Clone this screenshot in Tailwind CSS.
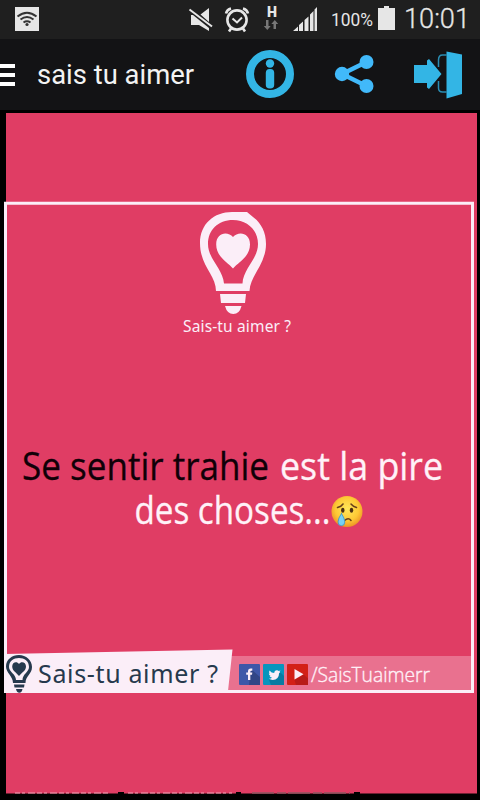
<!DOCTYPE html>
<html lang="fr">
<head>
  <meta charset="UTF-8">
  <meta name="viewport" content="width=device-width, initial-scale=1.0">
  <title>sais tu aimer</title>
  <script src="https://cdn.jsdelivr.net/npm/@tailwindcss/browser@4"></script>
</head>
<body class="bg-black w-[480px] h-[800px] overflow-hidden font-['Roboto',sans-serif]">

  <!-- Status bar -->
  <div class="flex h-[39px] bg-[#1f1f1f]">
    <svg class="w-[480px] h-[39px]" viewBox="0 0 480 39" fill="#e6e6e6">
      <rect x="15" y="7" width="24" height="24" />
      <g fill="none" stroke="#333" stroke-width="2">
        <path d="M17.500 16.500Q27 9 36.500 16.500" />
        <path d="M20.500 19.500Q27 14.500 33.500 19.500" />
        <path d="M23.500 22.500Q27 20 30.500 22.500" />
      </g>
      <circle cx="27" cy="24.500" r="1.600" fill="#333" />
      <!-- muted speaker -->
      <path d="M191 15v10h8l10 6V28L193 15zM200.500 14.500L209 8v14z" />
      <path d="M189.500 9.500L212 26.500" stroke="#e6e6e6" stroke-width="2" />
      <!-- alarm -->
      <g fill="none" stroke="#e6e6e6" stroke-width="2.600">
        <circle cx="237" cy="20" r="9.600" />
        <path d="M232.500 18.500l4.500 4 5-5" stroke-width="2" />
        <path d="M226 13.500q1-4 5-5M243 8.500q4 1 5 5" />
        <path d="M231 28.500l-2 3M243 28.500l2 3" />
      </g>
      <text x="267" y="17" font-family="Roboto" font-weight="900" font-size="14" textLength="10" lengthAdjust="spacingAndGlyphs">H</text>
      <path d="M266 20h2.500v6h2.200l-3.400 4-3.500-4h2.200zM273.500 29h2.500v-5h2.200l-3.400-4-3.500 4h2.200z" fill="#777" />
      <!-- signal -->
      <path d="M293 31l5-4.500V31zM299 31v-6l4-3.500V31zM304.500 31V20l4-3.500V31zM310 31V14.500l3.500-3.500V31zM314.500 31V9.500L317 7v24z" />
      <text x="331" y="26" font-family="Roboto" font-size="18.500" textLength="42" lengthAdjust="spacingAndGlyphs">100%</text>
      <path d="M378 8h6V6h5v2h6v22h-17z" />
      <text x="404" y="27.700" font-family="Roboto" font-weight="300" font-size="28" stroke="#e6e6e6" stroke-width="0.300" textLength="66" lengthAdjust="spacingAndGlyphs">10:01</text>
    </svg>
  </div>

  <!-- Action bar -->
  <header class="flex items-center h-[71px] bg-[#131315]">
    <div class="flex flex-col gap-[5px] w-[15px] mt-px">
      <span class="h-1 bg-white"></span>
      <span class="h-1 bg-white"></span>
      <span class="h-1 bg-white"></span>
    </div>
    <svg class="ml-[22px] w-[209px] h-[71px]" viewBox="37 39 209 71" fill="#f3f3f3">
      <text x="37" y="84" font-family="Roboto" font-size="27.500" textLength="157" lengthAdjust="spacingAndGlyphs">sais tu aimer</text>
    </svg>
    <svg class="w-12 h-12 mt-[-1px]" viewBox="0 0 48 48">
      <circle cx="24" cy="24" r="20" fill="none" stroke="#33b5e5" stroke-width="8" />
      <circle cx="24" cy="13.500" r="4.200" fill="#33b5e5" />
      <rect x="19.800" y="19" width="8.400" height="19.500" rx="3.800" fill="#33b5e5" />
    </svg>
    <svg class="ml-10 w-10 h-10 mt-[-1px]" viewBox="334 54 40 40" fill="#41b9fa">
      <path d="M366.500 62L342 74l24.500 12" fill="none" stroke="#41b9fa" stroke-width="4.500" />
      <circle cx="342" cy="74" r="7.200" />
      <circle cx="366.500" cy="62" r="7" />
      <circle cx="366.500" cy="86" r="7" />
    </svg>
    <svg class="ml-10 w-[50px] h-[50px]" viewBox="414 49 50 50" fill="#33b5e5">
      <path d="M414 64h13v-4.500l2-1.500L441.500 73 429 88l-2-1.500V82H414z" />
      <path d="M438.500 66v-7q0-5 4-5h4M438.500 80v7q0 4 4 4h4" fill="none" stroke="#2a8db3" stroke-width="1.500" />
      <path d="M446.500 50.500l15.500 3V93l-15.500 4.500z" />
    </svg>
  </header>

  <!-- Quote card -->
  <main class="mt-[3px] flex flex-col w-[480px] h-[682px]">
    <svg class="w-[480px] h-[682px]" viewBox="0 113 480 682">
      <defs>
        <radialGradient id="face" cx="50%" cy="42%" r="58%">
          <stop offset="0" stop-color="#ffe75a" />
          <stop offset="0.650" stop-color="#fdc935" />
          <stop offset="1" stop-color="#ed9425" />
        </radialGradient>
      </defs>
      <rect x="6" y="113" width="471" height="680.500" fill="#e03d64" />
      <!-- tops of the thumbnails below -->
      <path d="M15 793h94M128 793h104" stroke="#f0a5b8" stroke-width="1" stroke-dasharray="5 2 3 3 7 2" />
      <path d="M252 793h98" stroke="#8d5560" stroke-width="1.500" stroke-dasharray="22 3 9 2" />
      <path d="M118 792h6v3h-6zM236 792h5v3h-5zM354 792h6v3h-6z" fill="#000" />

      <!-- bottom band and frame -->
      <rect x="228" y="656" width="244" height="35" fill="#e9718f" />
      <path d="M5.500 203.300H472.500V691.500H5.500z" fill="none" stroke="#fbeef8" stroke-width="3" />
      <path d="M4 654L232.500 649.500 228 691v2H4z" fill="#fbeef8" />

      <!-- logo -->
      <g fill="#fbeef8">
        <path fill-rule="evenodd" d="M216 291C216 275 200 266 200 243C200 224 214 212 232 212H247L253 217C261 223 266 232 266 244C266 264 250 276 249.500 291zM224 283.500H242.500C243 269 258 259 258 244C258 230 247 220 233 220C218 220 208 230 208 244C208 259 223 269 224 283.500z" />
        <path d="M233 268.500C228 262.500 216.200 257 216.200 244.500C216.200 232 228 231 233 237C238 231 250 232 250 244.500C250 257 238 262.500 233 268.500z" />
        <path d="M220 294h26l-1 9h-24zM225 306h16.500q-2 8-8.200 8t-8.300-8z" />
      </g>
      <text x="183" y="332" font-family="Noto Sans" font-size="15.500" fill="#fbeef8" textLength="108" lengthAdjust="spacing">Sais-tu aimer ?</text>

      <!-- quote -->
      <g font-family="Open Sans" font-size="38" stroke-width="0.300">
        <text x="22" y="479.500" fill="#100007" stroke="#100007" textLength="247" lengthAdjust="spacingAndGlyphs">Se sentir trahie</text>
        <text x="280" y="479.500" fill="#fff2f8" stroke="#fff2f8" textLength="163" lengthAdjust="spacingAndGlyphs">est la pire</text>
        <text x="134.500" y="524" fill="#fff2f8" stroke="#fff2f8" textLength="196" lengthAdjust="spacingAndGlyphs">des choses...</text>
      </g>
      <g fill="none" stroke="#68401a" stroke-width="1.500" stroke-linecap="round">
        <circle cx="347" cy="511.500" r="15.500" fill="url(#face)" stroke="none" />
        <path d="M337.500 507.500q4-1 5.500-3.500M351 504q2 2.500 5.500 3.500M344.500 520.500q4-3.500 6.500 0" />
        <ellipse cx="342.800" cy="510.300" rx="1.700" ry="2.500" fill="#4a3014" stroke="none" />
        <ellipse cx="351.500" cy="510.300" rx="1.700" ry="2.500" fill="#4a3014" stroke="none" />
        <path d="M341.500 513.500q-3.500 5-3.500 8.500a3.400 3.700 0 0 0 6.800 0q0-3.500-3.300-8.500z" fill="#78d0f4" stroke="#3994c6" stroke-width="0.800" />
      </g>

      <!-- footer logo -->
      <g fill="#26394d">
        <path fill-rule="evenodd" d="M13 683C13 676 6 673 6 666.500C6 659.500 12 655 19 655S32 660 32 667C32 674 25.500 676 25.500 683zM16 680H22.500C22.500 674 29 672 29 667C29 661 24.500 658 19 658S9 661 9 667C9 672 16 674 16 680z" />
        <path d="M19 676C17 673 12.200 671 12.200 666.500C12.200 662 17 661 19 664C21 661 26 662 26 666.500C26 671 21 673 19 676z" />
        <path d="M14 684.500h10.500l-.5 3H14.500zM16 689h6.500q-.5 3.700-3.200 3.700T16 689z" />
        <text x="38" y="682.500" font-family="Noto Sans" font-size="25" textLength="180" lengthAdjust="spacing">Sais-tu aimer ?</text>
      </g>

      <!-- social -->
      <rect x="239" y="664" width="21" height="21" rx="1" fill="#3e57a8" />
      <path d="M251 669l9 8v8h-11z" fill="#314686" />
      <path d="M248 680v-5.200h-1.800v-2.300h1.800v-1.300q0-2.700 2.800-2.700h1.500v2.300h-1q-1 0-1 1v.7h2l-.3 2.300h-1.700V680z" fill="#fbeef8" />
      <rect x="263" y="664" width="21" height="21" rx="1" fill="#0795bd" />
      <path d="M279 671l5 5v9h-13l-2-5z" fill="#087ba2" />
      <path d="M269.500 670.500q2 2.500 4.700 2.600.2-3 2.800-2.900 1 0 1.700.7l1.800-.5-1 1.500.8.200-1.200 1.200q-.2 6.500-6.400 6.600-2.200 0-3.900-1.100 2.200 0 3.200-1-2-.5-2.400-1.800h1q-1.700-.8-1.800-2.500l.9.200q-1.200-1.500-.2-3.200z" fill="#fbeef8" />
      <rect x="287" y="664" width="21" height="21" rx="1" fill="#d32017" />
      <path d="M303.500 674.500l4.500 4v6.500h-12l-1.500-5z" fill="#b81b18" />
      <path d="M294.500 669l9 5.300-9 5.300z" fill="#fbeef8" />
      <text x="311" y="681.500" font-family="Open Sans" font-weight="300" font-size="21" fill="#fff0f7" stroke="#fff0f7" stroke-width="0.400" textLength="119" lengthAdjust="spacingAndGlyphs">/SaisTuaimerr</text>
    </svg>
  </main>
</body>
</html>
